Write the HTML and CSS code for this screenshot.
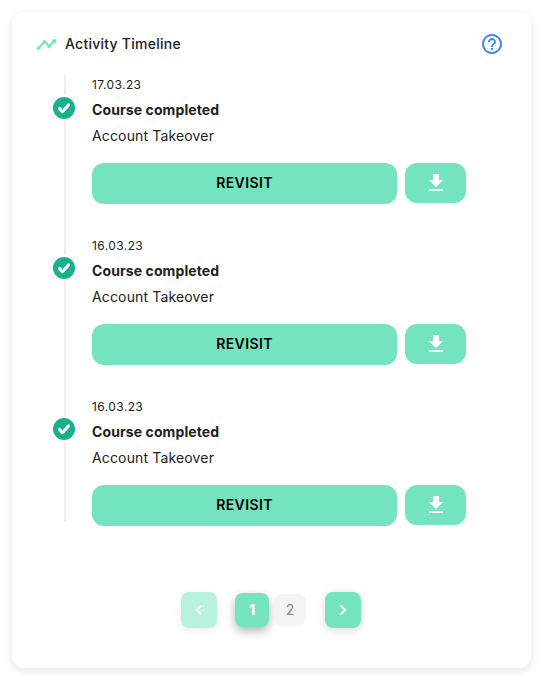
FILE: index.html
```html
<!DOCTYPE html>
<html lang="en">
    <head>
        <meta charset="UTF-8">
        <title>Activity Timeline</title>
        <link rel="stylesheet" href="styles.css">
    </head>
    <body>
        <!-- shared icons -->
        <svg class="sprite">
            <symbol id="check" viewBox="0 0 22 22">
                <path d="M6.500 11.400l3 3.300 6-6.700" fill="none" stroke="#fff" stroke-width="3.100" stroke-linecap="round" stroke-linejoin="round"/>
            </symbol>
            <symbol id="download" viewBox="0 0 24 24">
                <path d="M19 9h-4V3H9v6H5l7 7 7-7zM5 18v2h14v-2H5z" fill="#fff"/>
            </symbol>
        </svg>
        <div class="card">
            <div class="card-header">
                <svg class="title-icon" viewBox="0 0 24 24">
                    <path d="M23 8c0 1.100-.9 2-2 2-.18 0-.35-.02-.51-.07l-3.560 3.550c.05.16.07.34.07.52 0 1.100-.9 2-2 2s-2-.9-2-2c0-.18.02-.36.07-.52l-2.550-2.550c-.16.05-.34.07-.52.07s-.36-.02-.52-.07l-4.550 4.560c.05.16.07.33.07.51 0 1.100-.9 2-2 2s-2-.9-2-2 .9-2 2-2c.18 0 .35.02.51.07l4.560-4.550C8.020 9.360 8 9.180 8 9c0-1.100.9-2 2-2s2 .9 2 2c0 .18-.02.36-.07.52l2.550 2.550c.16-.05.34-.07.52-.07s.36.02.52.07l3.550-3.560C19.020 8.350 19 8.180 19 8c0-1.100.9-2 2-2s2 .9 2 2z" fill="#74e3bf" stroke="#74e3bf" stroke-width="0.500"/>
                </svg>
                <h1 class="title">Activity Timeline</h1>
                <svg class="help-icon" viewBox="0 0 24 24">
                    <path d="M11 18h2v-2h-2v2zm1-16C6.480 2 2 6.480 2 12s4.480 10 10 10 10-4.480 10-10S17.520 2 12 2zm0 18c-4.410 0-8-3.590-8-8s3.590-8 8-8 8 3.590 8 8-3.590 8-8 8zm0-14c-2.210 0-4 1.790-4 4h2c0-1.100.9-2 2-2s2 .9 2 2c0 2-3 1.750-3 5h2c0-2.250 3-2.500 3-5 0-2.210-1.790-4-4-4z" fill="#4285f4"/>
                </svg>
            </div>
            <div class="timeline">
                <div class="item">
                    <div class="dot"><svg><use href="#check"/></svg></div>
                    <div class="date">17.03.23</div>
                    <div class="event">Course completed</div>
                    <div class="course">Account Takeover</div>
                    <div class="actions">
                        <button class="btn revisit">REVISIT</button>
                        <button class="btn download"><svg><use href="#download"/></svg></button>
                    </div>
                </div>
                <div class="item">
                    <div class="dot"><svg><use href="#check"/></svg></div>
                    <div class="date">16.03.23</div>
                    <div class="event">Course completed</div>
                    <div class="course">Account Takeover</div>
                    <div class="actions">
                        <button class="btn revisit">REVISIT</button>
                        <button class="btn download"><svg><use href="#download"/></svg></button>
                    </div>
                </div>
                <div class="item">
                    <div class="dot"><svg><use href="#check"/></svg></div>
                    <div class="date">16.03.23</div>
                    <div class="event">Course completed</div>
                    <div class="course">Account Takeover</div>
                    <div class="actions">
                        <button class="btn revisit">REVISIT</button>
                        <button class="btn download"><svg><use href="#download"/></svg></button>
                    </div>
                </div>
            </div>
            <div class="pagination">
                <button class="arrow disabled"><svg viewBox="0 0 24 24"><path d="M15.410 7.410L14 6l-6 6 6 6 1.410-1.410L10.830 12z" fill="#fff" stroke="#fff" stroke-width="0.500"/></svg></button>
                <div class="pages">
                    <button class="page active">1</button>
                    <button class="page">2</button>
                </div>
                <button class="arrow"><svg viewBox="0 0 24 24"><path d="M10 6L8.590 7.410 13.170 12l-4.580 4.590L10 18l6-6z" fill="#fff" stroke="#fff" stroke-width="0.500"/></svg></button>
            </div>
        </div>
    </body>
</html>
```
FILE: styles.css
```css
* {
    box-sizing: border-box;
}

body {
    margin: 0;
    padding: 12px;
    background: #fff;
    color: #212121;
    font-family: Inter, "Liberation Sans", sans-serif;
}

button {
    padding: 0;
    border: none;
    font-family: inherit;
}

.sprite {
    display: none;
}

.card {
    width: 519px;
    height: 656px;
    padding: 20px 24px;
    border-radius: 12px;
    background: #fff;
    box-shadow: 0 3px 8px rgba(0, 0, 0, 0.1);
}

.card-header {
    display: flex;
    align-items: center;
    height: 24px;
}

.title-icon {
    width: 21px;
    height: 21px;
    margin-right: 8px;
}

.title {
    margin: 0;
    font-size: 14px;
    font-weight: 500;
    line-height: 24px;
    letter-spacing: 0.25px;
}

.help-icon {
    width: 24px;
    height: 24px;
    margin-left: auto;
    margin-right: 3px;
}

/* timeline */
.timeline {
    position: relative;
    height: 446px;
    margin-top: 19px;
    margin-left: 28px;
    padding-left: 28px;
}

.timeline::before {
    content: "";
    position: absolute;
    top: 0;
    left: 0;
    width: 2px;
    height: 446px;
    background: #eee;
}

.item {
    position: relative;
    height: 161px;
}

.dot {
    position: absolute;
    top: 22px;
    left: -39px;
    width: 22px;
    height: 22px;
    border-radius: 50%;
    background: #1bb08c;
    box-shadow: 0 0 0 2px #fff;
}

.item + .item .dot {
    top: 21px;
}

.dot svg {
    display: block;
    width: 22px;
    height: 22px;
}

.date {
    font-size: 12px;
    line-height: 20px;
    letter-spacing: 0.4px;
}

.event {
    margin-top: 2px;
    font-size: 14px;
    font-weight: 700;
    line-height: 26px;
    letter-spacing: 0.1px;
}

.course {
    font-size: 14px;
    line-height: 26px;
    letter-spacing: 0.15px;
}

.actions {
    display: flex;
    gap: 8px;
    margin-top: 14px;
}

.btn {
    border-radius: 12px;
    background: #74e3bf;
}

.revisit {
    width: 305px;
    height: 41px;
    padding-bottom: 2px;
    color: #000;
    font-size: 14px;
    font-weight: 600;
    letter-spacing: 0.4px;
}

.download {
    display: flex;
    align-items: center;
    justify-content: center;
    width: 61px;
    height: 40px;
}

.download svg {
    width: 24px;
    height: 24px;
}

/* pagination */
.pagination {
    display: flex;
    align-items: center;
    margin-top: 71px;
    padding-left: 145px;
}

.arrow {
    display: flex;
    align-items: center;
    justify-content: center;
    width: 36px;
    height: 36px;
    border-radius: 8px;
    background: #74e3bf;
    box-shadow: 0 2px 8px rgba(0, 0, 0, 0.15);
}

.arrow svg {
    width: 20px;
    height: 20px;
}

.disabled {
    background: #b9f1df;
    box-shadow: 0 2px 8px rgba(0, 0, 0, 0.08);
}

.pages {
    display: flex;
    align-items: center;
    gap: 5px;
    margin: 0 19px 0 18px;
}

.page {
    width: 32px;
    height: 32px;
    padding-bottom: 1px;
    border-radius: 8px;
    background: #f4f4f4;
    color: #888;
    font-size: 14px;
}

.active {
    width: 34px;
    height: 34px;
    padding-bottom: 2px;
    background: #74e3bf;
    color: #fff;
    font-weight: 800;
    box-shadow: 0 4px 10px rgba(0, 0, 0, 0.3);
}
```
